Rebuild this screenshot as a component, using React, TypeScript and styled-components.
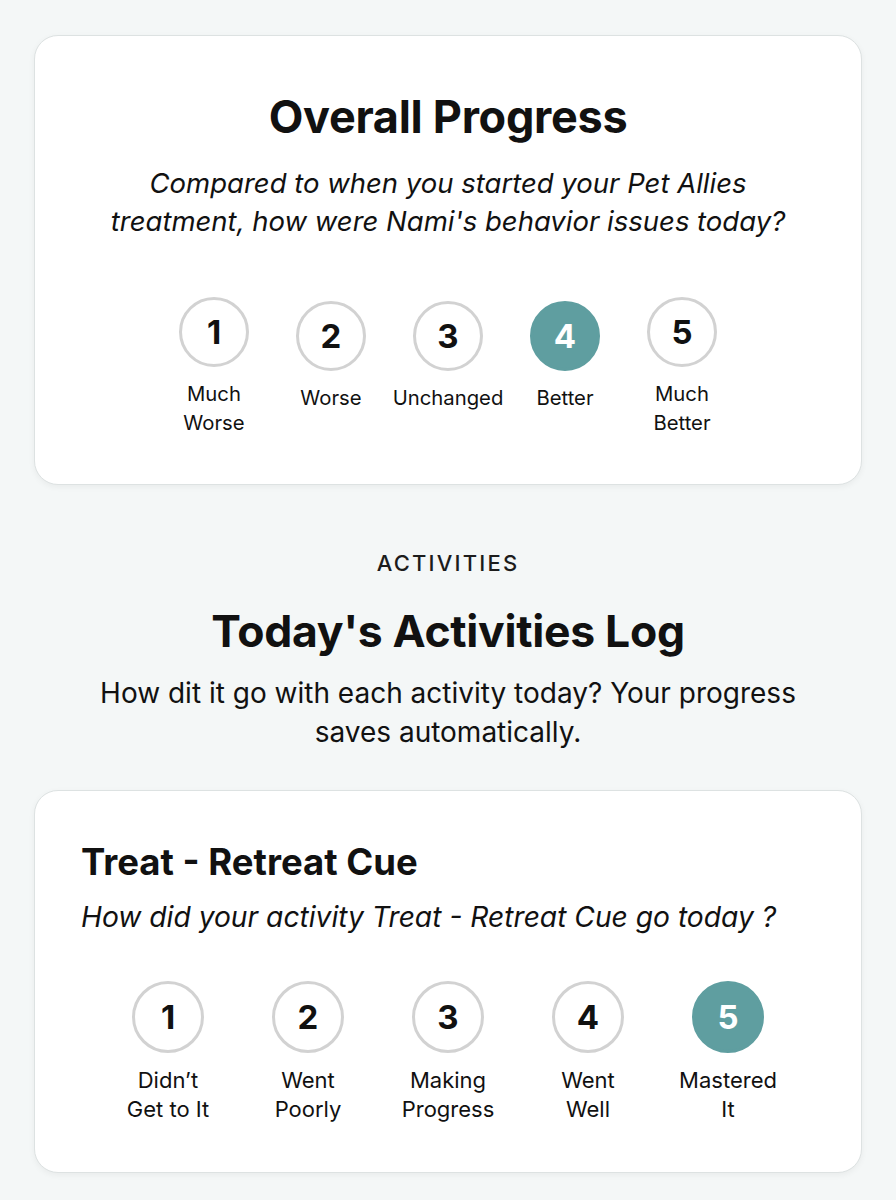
import styled, { createGlobalStyle } from "styled-components";

const GlobalStyle = createGlobalStyle`
  body {
    margin: 0;
    background: #f4f7f7;
    font-family: Inter, "Noto Sans", sans-serif;
    color: #111111;
  }
`;

const overall = [
    {value: 1, label: ['Much', 'Worse']},
    {value: 2, label: ['Worse']},
    {value: 3, label: ['Unchanged']},
    {value: 4, label: ['Better']},
    {value: 5, label: ['Much', 'Better']},
];

const activity = [
    {value: 1, label: ['Didn’t', 'Get to It']},
    {value: 2, label: ['Went', 'Poorly']},
    {value: 3, label: ['Making', 'Progress']},
    {value: 4, label: ['Went', 'Well']},
    {value: 5, label: ['Mastered', 'It']},
];

type Option = { value: number; label: string[] };

const Scale = ({options, selected, wide}: { options: Option[]; selected: number; wide?: boolean }) => (
    <SScale $wide={wide}>
        {options.map(o => (
            <SItem key={o.value} $wide={wide} $single={o.label.length === 1}>
                <SCircle $active={o.value === selected} $wide={wide}>{o.value}</SCircle>
                <SLabel $wide={wide}>
                    {o.label.map(l => <div key={l}>{l}</div>)}
                </SLabel>
            </SItem>
        ))}
    </SScale>
);

export default function App() {
    return (
        <>
            <GlobalStyle/>
            <SPage>
                <SCard $center>
                    <STitle>Overall Progress</STitle>
                    <SQuestion $center>
                        Compared to when you started your Pet Allies<br/>
                        treatment, how were Nami's behavior issues today?
                    </SQuestion>
                    <Scale options={overall} selected={4}/>
                </SCard>

                <SSection>
                    <SEyebrow>ACTIVITIES</SEyebrow>
                    <SHeading>Today's Activities Log</SHeading>
                    <SIntro>
                        How dit it go with each activity today? Your progress<br/>
                        saves automatically.
                    </SIntro>
                </SSection>

                <SCard>
                    <SActivityTitle>Treat - Retreat Cue</SActivityTitle>
                    <SQuestion>How did your activity Treat - Retreat Cue go today ?</SQuestion>
                    <Scale options={activity} selected={5} wide/>
                </SCard>
            </SPage>
        </>
    );
}

const SPage = styled.div`
  width: 828px;
  margin: 0 auto;
  padding: 35px 0 28px;
  display: flex;
  flex-direction: column;
`;

const SCard = styled.div<{ $center?: boolean }>`
  background: #ffffff;
  border: 1.5px solid #dde2e2;
  border-radius: 24px;
  box-shadow: 0 2px 6px rgba(0, 0, 0, 0.05);
  padding: ${p => p.$center ? '55px 40px 47px' : '48px 46px 48px'};
  display: flex;
  flex-direction: column;
  align-items: ${p => p.$center ? 'center' : 'stretch'};
  text-align: ${p => p.$center ? 'center' : 'left'};
`;

const STitle = styled.h1`
  margin: 0;
  font-size: 45px;
  line-height: 52px;
  font-weight: 700;
  letter-spacing: -0.3px;
`;

const SQuestion = styled.p<{ $center?: boolean }>`
  margin: ${p => p.$center ? '21px 0 57px' : '13px 0 45px'};
  font-size: ${p => p.$center ? '27.5px' : '28.2px'};
  line-height: 38px;
  font-style: italic;
  color: #111111;
`;

const SScale = styled.div<{ $wide?: boolean }>`
  display: flex;
  justify-content: center;
  align-items: flex-start;
  gap: ${p => p.$wide ? '30px' : '10px'};
`;

const SItem = styled.div<{ $wide?: boolean; $single?: boolean }>`
  width: ${p => p.$wide ? '110px' : '107px'};
  display: flex;
  flex-direction: column;
  align-items: center;
  padding-top: ${p => p.$single ? '4px' : '0'};
`;

const SCircle = styled.div<{ $active?: boolean; $wide?: boolean }>`
  box-sizing: border-box;
  width: ${p => p.$wide ? '72px' : '70px'};
  height: ${p => p.$wide ? '72px' : '70px'};
  border-radius: 50%;
  border: 3px solid ${p => p.$active ? '#5f9ea0' : '#d2d2d2'};
  background: ${p => p.$active ? '#5f9ea0' : '#ffffff'};
  color: ${p => p.$active ? '#ffffff' : '#111111'};
  display: flex;
  align-items: center;
  justify-content: center;
  font-size: 33px;
  font-weight: 700;
`;

const SLabel = styled.div<{ $wide?: boolean }>`
  margin-top: ${p => p.$wide ? '13px' : '12px'};
  font-size: ${p => p.$wide ? '22px' : '20.3px'};
  line-height: 29px;
  text-align: center;
  white-space: nowrap;
`;

const SSection = styled.div`
  display: flex;
  flex-direction: column;
  align-items: center;
  text-align: center;
  padding: 65px 0 38px;
`;

const SEyebrow = styled.div`
  font-size: 22px;
  font-weight: 500;
  letter-spacing: 2.2px;
  color: #1c1c1c;
`;

const SHeading = styled.h2`
  margin: 28px 0 0;
  font-size: 44.5px;
  line-height: 54px;
  font-weight: 700;
  letter-spacing: -0.3px;
`;

const SIntro = styled.p`
  margin: 16px 0 0;
  font-size: 28px;
  line-height: 39px;
  color: #111111;
`;

const SActivityTitle = styled.h3`
  margin: 0;
  font-size: 36.5px;
  line-height: 46px;
  font-weight: 700;
`;
